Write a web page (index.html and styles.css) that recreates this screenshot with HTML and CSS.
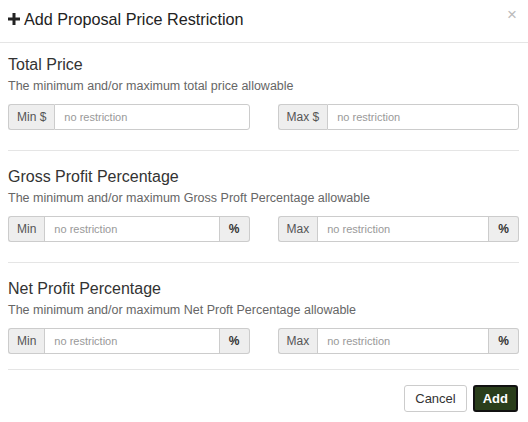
FILE: index.html
```html
<!DOCTYPE html>
<html lang="en">
<head>
    <meta charset="UTF-8">
    <title>Add Proposal Price Restriction</title>
    <link rel="stylesheet" href="styles.css">
</head>
<body>

    <div class="modal">
        <div class="modal-header">
            <h4 class="modal-title">
                <svg class="plus" width="12" height="12" viewBox="0 0 12 12"><rect x="4.5" y="0" width="3" height="12"/><rect x="0" y="4.5" width="12" height="3"/></svg>
                Add Proposal Price Restriction
            </h4>
            <span class="close">&times;</span>
        </div>

        <div class="modal-body">
            <div class="section">
                <div class="sec-title">Total Price</div>
                <div class="sec-desc">The minimum and/or maximum total price allowable</div>
                <div class="row">
                    <div class="input-group">
                        <span class="addon">Min $</span>
                        <input type="text" class="field" placeholder="no restriction">
                    </div>
                    <div class="input-group">
                        <span class="addon">Max $</span>
                        <input type="text" class="field" placeholder="no restriction">
                    </div>
                </div>
            </div>

            <div class="section">
                <div class="sec-title">Gross Profit Percentage</div>
                <div class="sec-desc">The minimum and/or maximum Gross Proft Percentage allowable</div>
                <div class="row">
                    <div class="input-group">
                        <span class="addon">Min</span>
                        <input type="text" class="field" placeholder="no restriction">
                        <span class="addon pct">%</span>
                    </div>
                    <div class="input-group">
                        <span class="addon">Max</span>
                        <input type="text" class="field" placeholder="no restriction">
                        <span class="addon pct">%</span>
                    </div>
                </div>
            </div>

            <div class="section">
                <div class="sec-title">Net Profit Percentage</div>
                <div class="sec-desc">The minimum and/or maximum Net Proft Percentage allowable</div>
                <div class="row">
                    <div class="input-group">
                        <span class="addon">Min</span>
                        <input type="text" class="field" placeholder="no restriction">
                        <span class="addon pct">%</span>
                    </div>
                    <div class="input-group">
                        <span class="addon">Max</span>
                        <input type="text" class="field" placeholder="no restriction">
                        <span class="addon pct">%</span>
                    </div>
                </div>
            </div>
        </div>

        <div class="modal-footer">
            <button type="button" class="btn btn-default">Cancel</button>
            <button type="button" class="btn btn-add">Add</button>
        </div>
    </div>

</body>
</html>
```

FILE: styles.css
```css
body {
    margin: 0;
    background: #fff;
    font-family: "Liberation Sans", Arial, Helvetica, sans-serif;
    color: #333;
}
.modal {
    width: 528px;
}
.modal-header {
    display: flex;
    justify-content: space-between;
    align-items: flex-start;
    padding: 4px 8px 8px 8px;
    border-bottom: 1px solid #e5e5e5;
}
.modal-title {
    margin: 0;
    font-size: 16.2px;
    font-weight: normal;
    line-height: 30px;
    display: flex;
    align-items: center;
    gap: 4px;
    color: #222;
}
.plus {
    fill: #222;
    margin-top: -1px;
}
.close {
    color: #bbb;
    font-size: 17px;
    line-height: 14px;
    margin-top: 4px;
    margin-right: 3px;
}
.modal-body {
    padding: 0 9px 0 8px;
}
.section {
    padding: 11px 0 20px 0;
    border-bottom: 1px solid #e5e5e5;
}
.section + .section {
    padding-top: 15px;
}
.section:last-child {
    padding-bottom: 15px;
}
.sec-title {
    font-size: 16px;
    line-height: 22px;
    color: #333;
}
.sec-desc {
    font-size: 12.5px;
    line-height: 20px;
    color: #666;
}
.row {
    display: flex;
    gap: 28px;
    margin-top: 8px;
}
.input-group {
    display: flex;
    flex: 1;
    height: 26px;
}
.addon {
    display: flex;
    align-items: center;
    padding: 0 8px;
    background-color: #eee;
    border: 1px solid #ccc;
    font-size: 12px;
    color: #555;
    border-radius: 3px 0 0 3px;
    border-right: none;
}
.addon.pct {
    font-weight: bold;
    color: #333;
    padding: 0 9px;
    border-right: 1px solid #ccc;
    border-left: none;
    border-radius: 0 3px 3px 0;
}
.field {
    flex: 1;
    min-width: 0;
    box-sizing: border-box;
    height: 26px;
    border: 1px solid #ccc;
    border-radius: 0 3px 3px 0;
    padding: 0 9px;
    font-family: inherit;
    font-size: 11px;
    color: #555;
    outline: none;
}
.field:not(:last-child) {
    border-radius: 0;
}
.field::placeholder {
    color: #999;
}
.modal-footer {
    display: flex;
    justify-content: flex-end;
    gap: 6px;
    padding: 15px 10px 10px 0;
}
.btn {
    height: 27px;
    padding: 0 10px;
    font-family: inherit;
    font-size: 13px;
    border-radius: 3px;
    cursor: pointer;
}
.btn-default {
    background: #fff;
    border: 1px solid #ccc;
    color: #333;
}
.btn-add {
    background-color: #2a3e1b;
    border: 2px solid #111;
    color: #fff;
    font-weight: bold;
    padding: 0 8px;
}
```
